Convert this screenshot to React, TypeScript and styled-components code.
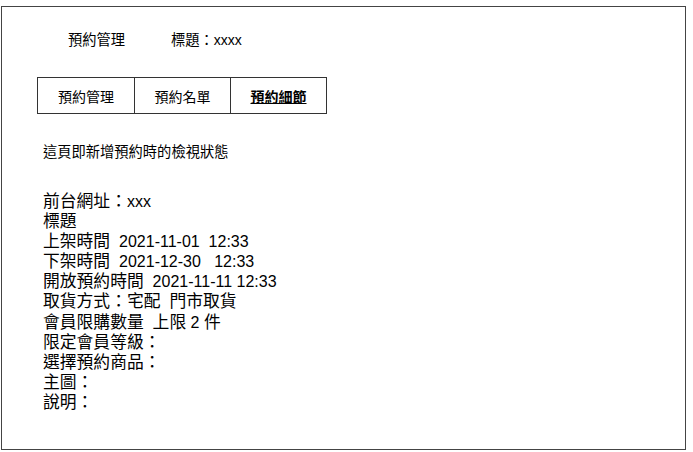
import React from "react";
import styled, { createGlobalStyle } from "styled-components";

const Global = createGlobalStyle`
  html, body { margin: 0; padding: 0; background: #fff; }
  body { font-family: "Liberation Sans", "Noto Sans CJK TC", sans-serif; color: #000; }
`;

const Frame = styled.div`
  box-sizing: border-box;
  margin: 6px 0 0 1px;
  width: 685px;
  height: 444px;
  border: 1px solid #444;
  display: flex;
  flex-direction: column;
`;

const Header = styled.div`
  display: flex;
  gap: 46px;
  margin: 23px 0 0 66px;
  font-size: 14px;
  line-height: 20px;
`;

const Tabs = styled.div`
  display: flex;
  margin: 27px 0 0 35px;
  align-self: flex-start;
  border: 1px solid #333;
`;

const Tab = styled.div<{ $active?: boolean }>`
  box-sizing: border-box;
  width: 96px;
  height: 35px;
  display: flex;
  align-items: center;
  justify-content: center;
  font-size: 14px;
  font-weight: ${(p) => (p.$active ? 700 : 400)};
  text-decoration: ${(p) => (p.$active ? "underline" : "none")};
  & + & { border-left: 1px solid #333; }
`;

const Intro = styled.div`
  margin: 28px 0 0 41px;
  font-size: 14px;
  line-height: 20px;
`;

const Details = styled.div`
  margin: 30px 0 0 41px;
  font-size: 16px;
  line-height: 20.1px;
  white-space: pre;
`;

const Line = styled.div`
  height: 20.1px;
`;

const Cjk = styled.span<{ $scale: number }>`
  font-size: ${(p) => p.$scale}em;
  line-height: 1;
`;

function Mixed({ text, scale }: { text: string; scale: number }) {
  const parts = text.split(/([\u3000-\u9fff\uff00-\uffef]+)/).filter(Boolean);
  return (
    <>
      {parts.map((p, i) =>
        /[\u3000-\u9fff\uff00-\uffef]/.test(p) ? (
          <Cjk key={i} $scale={scale}>
            {p}
          </Cjk>
        ) : (
          <React.Fragment key={i}>{p}</React.Fragment>
        )
      )}
    </>
  );
}

const lines = [
  "前台網址：xxx",
  "標題",
  "上架時間  2021-11-01  12:33",
  "下架時間  2021-12-30   12:33",
  "開放預約時間  2021-11-11 12:33",
  "取貨方式：宅配  門市取貨",
  "會員限購數量  上限 2 件",
  "限定會員等級：",
  "選擇預約商品：",
  "主圖：",
  "說明：",
];

export default function App() {
  return (
    <>
      <Global />
      <Frame>
        <Header>
          <span>
            <Mixed text="預約管理" scale={1.02} />
          </span>
          <span>
            <Mixed text="標題：xxxx" scale={1.02} />
          </span>
        </Header>
        <Tabs>
          <Tab>預約管理</Tab>
          <Tab>預約名單</Tab>
          <Tab $active>預約細節</Tab>
        </Tabs>
        <Intro>
          <Mixed text="這頁即新增預約時的檢視狀態" scale={1.02} />
        </Intro>
        <Details>
          {lines.map((l) => (
            <Line key={l}>
              <Mixed text={l} scale={1.05} />
            </Line>
          ))}
        </Details>
      </Frame>
    </>
  );
}
